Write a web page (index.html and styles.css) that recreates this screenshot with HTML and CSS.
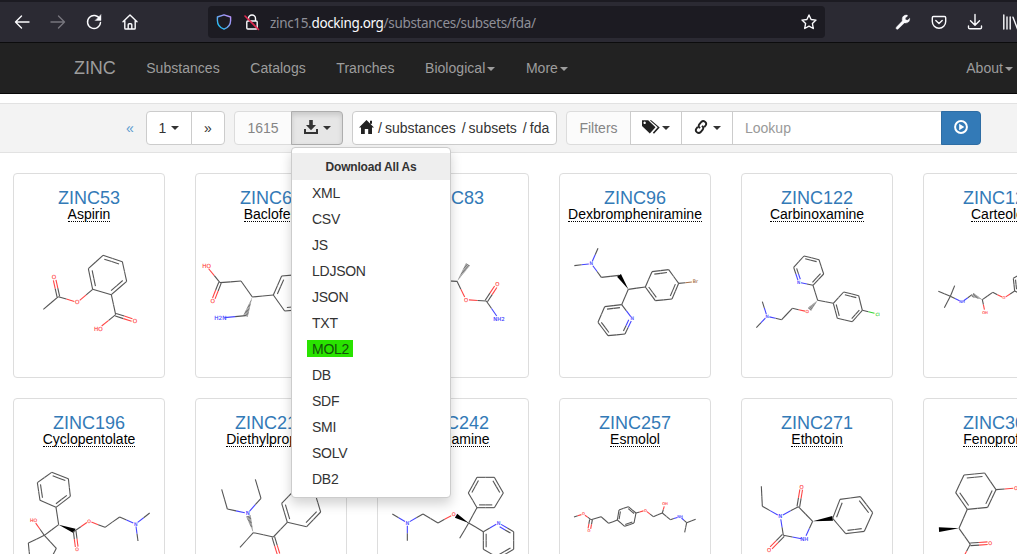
FILE: index.html
```html
<!DOCTYPE html>
<html lang="en">
<head>
<meta charset="utf-8">
<title>ZINC substances</title>
<link rel="stylesheet" href="styles.css">
</head>
<body>
<div class="browser">
  <svg class="bi back" viewBox="0 0 16 16"><path d="M15 8H1.500M7.500 2 1.500 8l6 6"/></svg>
  <svg class="bi forward" viewBox="0 0 16 16"><path d="M1 8h13.500M8.500 2l6 6-6 6"/></svg>
  <svg class="bi reload" viewBox="0 0 16 16"><path d="M13.800 5A6.500 6.500 0 1 0 14.500 8.500"/><path class="solid" d="M15 .8v5.700H9.300z"/></svg>
  <svg class="bi home" viewBox="0 0 16 16"><path d="M1 7.800 8 1l7 6.800M2.800 7v7.200q0 .8.8.8h8.800q.8 0 .8-.8V7M6.200 15v-4.200q0-1 1-1h1.600q1 0 1 1V15"/></svg>
  <div class="urlbar">
    <svg class="bi shield" viewBox="0 0 16 16"><defs><linearGradient id="sg" x1="0" y1="1" x2="1" y2="0"><stop offset="0" stop-color="#00c8f5"/><stop offset=".6" stop-color="#8a9cf0"/><stop offset="1" stop-color="#c090ff"/></linearGradient></defs><path stroke="url(#sg)" d="M8 .8 14.600 3v3.500c0 4-2.500 7.200-6.600 8.700C3.900 13.700 1.400 10.500 1.400 6.500V3z"/></svg>
    <svg class="bi lock" viewBox="0 0 16 16"><path d="M4.500 7V4.500a3.500 3.500 0 0 1 7 0V7M3.800 7h8.400q1 0 1 1v6q0 1-1 1H3.800q-1 0-1-1V8q0-1 1-1z"/><path class="slash" d="M1 2l13.500 13.500"/></svg>
    <span class="url">zinc15.<b>docking.org</b>/substances/subsets/fda/</span>
    <svg class="bi star" viewBox="0 0 16 16"><path d="M8 1l2.100 4.500 4.900.6-3.600 3.400.9 5L8 12.100l-4.300 2.400.9-5L1 6.100l4.900-.6z"/></svg>
  </div>
  <svg class="bi wrench" viewBox="0 0 16 16"><path class="solid" d="M14.700 4.600 12.400 6.300 10.500 5.800 10.200 3.900 12.400 2.200V1.200C9.500.6 7 2.500 7.200 5.500L7.300 7 1.300 13.200q-.7 1.500.4 2 1 .3 1.700-.5L9.300 8.900C12.800 9.500 15 7.500 14.700 4.600z"/></svg>
  <svg class="bi pocket" viewBox="0 0 16 16"><path d="M2.500 2.500h11q1.200 0 1.200 1.200V7.500a6.700 6.700 0 0 1-13.400 0V3.700q0-1.200 1.200-1.200zM4.800 6.500 8 9.600l3.200-3.100"/></svg>
  <svg class="bi dl" viewBox="0 0 16 16"><path d="M8 .5v10.500M3.500 6.800 8 11.200l4.500-4.400M1.500 12v1.500q0 1.300 1.300 1.300h10.400q1.300 0 1.300-1.300V12"/></svg>
  <svg class="bi library" viewBox="0 0 16 16"><path d="M.8 1v14M4 3v12M7.200 3v12M10 3.200 14.500 15"/></svg>
</div>
<nav class="navbar">
  <span class="brand">ZINC</span>
  <span>Substances</span>
  <span>Catalogs</span>
  <span>Tranches</span>
  <span>Biological<i class="caret"></i></span>
  <span>More<i class="caret"></i></span>
  <span class="about">About<i class="caret"></i></span>
</nav>
<div class="band">
  <span class="prev">«</span>
  <div class="group pager"><span class="btn page">1<i class="caret"></i></span><span class="btn next">»</span></div>
  <div class="group results">
    <span class="btn muted count">1615</span>
    <span class="btn active download"><svg class="gi" viewBox="0 0 14 14"><path d="M5.200 0h3.600v5h3.200L7 10.200 2 5h3.200zM0 9h2v3h10V9h2v5H0z"/></svg><i class="caret"></i>
      <div class="menu">
        <div class="menu-title">Download All As</div>
        <div class="item">XML</div><div class="item">CSV</div><div class="item">JS</div><div class="item">LDJSON</div><div class="item">JSON</div><div class="item">TXT</div>
        <div class="item"><mark>MOL2</mark></div>
        <div class="item">DB</div><div class="item">SDF</div><div class="item">SMI</div><div class="item">SOLV</div><div class="item">DB2</div>
      </div>
    </span>
  </div>
  <div class="crumbs"><svg class="house" viewBox="0 0 15 14"><path d="M7.500 0 15 7.500h-2V14H9.200V9H5.800v5H2V7.500H0zM11 .8h2v3h-2z"/></svg><span>/</span><span>substances</span><span class="sep">/</span><span>subsets</span><span class="sep">/</span><span>fda</span></div>
  <div class="group search">
    <span class="btn muted filters">Filters</span>
    <span class="btn tags"><svg class="tag-icon" viewBox="0 0 18 14"><path fill-rule="evenodd" d="M0 .2h6.200L13.500 7.200 7.800 13.600 0 6zM2.600 1.600a1.200 1.200 0 1 0 .1 0z"/><path d="M7.700.2h1.500L17.700 7.400 12 13.800l-1.200-1 4.900-5.500z"/></svg><i class="caret"></i></span>
    <span class="btn link"><svg class="chain" viewBox="0 0 14 14"><g fill="none" stroke="#222" stroke-width="1.900"><path d="M5.900 8.300 5 7Q4.300 5.700 5.300 4.300L7.300 2q1.700-1.700 3.700-.3 2 1.600.7 3.600L10.200 7.300"/><path d="M8.100 5.700 9 7q.7 1.300-.3 2.700L6.700 12q-1.700 1.700-3.700.3-2-1.600-.7-3.600L3.800 6.700"/></g></svg><i class="caret"></i></span>
    <input class="lookup" placeholder="Lookup">
    <span class="btn go"><svg class="gi" viewBox="0 0 14 14"><circle cx="7" cy="7" r="5.900" fill="none" stroke="#fff" stroke-width="2"/><path fill="#fff" d="M5.200 3.800 10.300 7l-5.100 3.200z"/></svg></span>
  </div>
</div>
<main class="cards">
  <article class="card"><h4>ZINC53</h4><p><abbr>Aspirin</abbr></p><svg class="mol" data-mol="aspirin" viewBox="42 177 450 456"></svg></article>
  <article class="card"><h4>ZINC61</h4><p><abbr>Baclofen</abbr></p><svg class="mol" data-mol="baclofen" viewBox="588 177 450 456"></svg></article>
  <article class="card"><h4>ZINC83</h4><p></p><svg class="mol" data-mol="carbamate" viewBox="294 237 450 456"></svg></article>
  <article class="card"><h4>ZINC96</h4><p><abbr>Dexbrompheniramine</abbr></p><svg class="mol" data-mol="dexbrompheniramine" viewBox="30 177 450 456"></svg></article>
  <article class="card"><h4>ZINC122</h4><p><abbr>Carbinoxamine</abbr></p><svg class="mol" data-mol="carbinoxamine" viewBox="21 177 450 456"></svg></article>
  <article class="card"><h4>ZINC125</h4><p><abbr>Carteolol</abbr></p><svg class="mol" data-mol="carteolol" viewBox="567 177 450 456"></svg></article>
  <article class="card"><h4>ZINC196</h4><p><abbr>Cyclopentolate</abbr></p><svg class="mol" data-mol="cyclopentolate" viewBox="42 177 450 456"></svg></article>
  <article class="card"><h4>ZINC210</h4><p><abbr>Diethylpropion</abbr></p><svg class="mol" data-mol="diethylpropion" viewBox="588 177 450 456"></svg></article>
  <article class="card"><h4>ZINC242</h4><p><abbr>Doxylamine</abbr></p><svg class="mol" data-mol="doxylamine" viewBox="294 327 450 456"></svg></article>
  <article class="card"><h4>ZINC257</h4><p><abbr>Esmolol</abbr></p><svg class="mol" data-mol="esmolol" viewBox="30 177 450 456"></svg></article>
  <article class="card"><h4>ZINC271</h4><p><abbr>Ethotoin</abbr></p><svg class="mol" data-mol="ethotoin" viewBox="21 177 450 456"></svg></article>
  <article class="card"><h4>ZINC301</h4><p><abbr>Fenoprofen</abbr></p><svg class="mol" data-mol="fenoprofen" viewBox="567 177 450 456"></svg></article>
</main>
<script src="molecules.js"></script>
</body>
</html>
```
FILE: styles.css
```css
* { box-sizing: border-box; }
html { overflow: hidden; }
body { margin: 0; width: 1017px; height: 554px; overflow: hidden; background: #fff; font: 14px/20px "Liberation Sans", Arial, sans-serif; color: #333; }
.browser { display: flex; align-items: center; height: 43px; overflow: hidden; background: #2b2a33; border-top: 2px solid #1c1b22; border-bottom: 1px solid #0c0c0d; padding-left: 14px; }
.bi { flex: none; width: 16px; height: 16px; fill: none; stroke: #fbfbfe; stroke-width: 1.4; stroke-linecap: round; stroke-linejoin: round; overflow: visible; }
.bi .solid { fill: #fbfbfe; stroke-width: .4; }
.bi .slash { stroke: #e22850; stroke-width: 1.6; }
.forward { margin-left: 20px; stroke: #77767e; }
.reload { margin-left: 20px; }
.home { margin-left: 20px; }
.urlbar { flex: none; display: flex; align-items: center; width: 617px; height: 32px; margin-left: 70px; margin-right: 70px; padding: 0 8px; border-radius: 4px; background: #1c1b22; }
.lock { margin-left: 12px; }
.url { margin-left: 10px; color: #8f8f98; font: 13.5px/20px "Noto Sans", sans-serif; letter-spacing: -.33px; white-space: nowrap; padding-top: 1px; }
.url b { font-weight: 400; color: #fbfbfe; }
.star { margin-left: auto; }
.pocket, .dl, .library { margin-left: 20px; }
.caret { display: inline-block; border: 4px solid transparent; border-top-color: currentColor; border-bottom: 0; vertical-align: middle; margin-left: 2px; }
.navbar { display: flex; align-items: center; gap: 30.6px; height: 51px; padding: 0 4px 0 74px; background: #222; border-bottom: 1px solid #080808; color: #9d9d9d; white-space: nowrap; letter-spacing: .03px; }
.brand { font-size: 18px; letter-spacing: -.1px; }
.about { margin-left: auto; }
.band { display: flex; align-items: center; height: 50px; margin-top: 9px; background: #f3f3f3; border-top: 1px solid #e2e2e2; border-bottom: 1px solid #e2e2e2; }
.prev { width: 146px; padding-left: 126px; color: #5d9bd0; }
.group { display: flex; height: 34px; }
.btn { position: relative; display: flex; align-items: center; justify-content: center; height: 34px; border: 1px solid #ccc; background: #fff; color: #333; }
.btn + .btn { margin-left: -1px; }
.btn:first-child { border-radius: 4px 0 0 4px; }
.btn:last-child { border-radius: 0 4px 4px 0; }
.page { width: 46px; }
.page .caret { margin-left: 5px; }
.next { width: 34px; }
.results { margin-left: 9px; }
.muted { color: #858585; background: #fbfbfb; border-color: #dcdcdc; }
.count { width: 58px; }
.download { width: 52px; }
.active { background: #e6e6e6; border-color: #adadad; box-shadow: inset 0 3px 5px rgba(0,0,0,.125); }
.btn .caret { flex: none; }
.download .caret, .link .caret { margin-left: 5px; }
.download .gi { margin-top: -2px; }
.gi, .chain { width: 14px; height: 14px; fill: #333; }
.chain { margin-top: -2px; }
.menu { position: absolute; z-index: 5; left: -1px; top: 35px; width: 160px; padding: 5px 0; background: #fff; border: 1px solid #ccc; border-radius: 4px; box-shadow: 0 6px 12px rgba(0,0,0,.175); }
.menu-title { height: 27px; background: #eee; font-size: 12px; line-height: 29px; font-weight: 700; text-align: center; letter-spacing: -.2px; }
.item { height: 26px; padding-left: 20px; line-height: 26px; letter-spacing: -.25px; }
mark { display: inline-block; height: 17px; line-height: 19px; margin-left: -5px; padding: 0 4px 0 5px; background: #29e300; color: #12500b; }
.crumbs { display: flex; align-items: center; width: 205px; height: 34px; margin-left: 9px; padding-left: 6px; border: 1px solid #ccc; border-radius: 4px; background: #fff; white-space: nowrap; }
.crumbs span + span { margin-left: 3px; }
.crumbs .sep.sep { margin-left: 6px; }
.house { width: 15px; height: 14px; margin: -2px 4px 0 0; fill: #222; }
.search { margin-left: 9px; }
.filters { width: 65px; }
.tags, .link { width: 52px; }
.tags .caret { margin-left: 2px; }
.tag-icon { width: 18px; height: 14px; margin-top: -2px; fill: #222; }
.lookup { width: 210px; height: 34px; margin: 0 0 0 -1px; padding: 6px 12px; border: 1px solid #ccc; background: #fff; font: inherit; color: #555; }
.lookup::placeholder { color: #999; opacity: 1; }
.go { width: 40px; margin-left: -1px; background: #337ab7; border-color: #2e6da4; }
.go .gi { margin-top: -2px; }
.cards { display: grid; grid-template-columns: repeat(6, 152px); gap: 20px 30px; padding: 20px 0 0 13px; height: 401px; overflow: hidden; }
.card { height: 205px; padding-top: 14px; border: 1px solid #ddd; border-radius: 4px; text-align: center; color: #000; }
.card h4 { margin: 0; font-size: 18px; line-height: 20px; font-weight: 400; color: #337ab7; }
.card p { margin: -2px 0 0; height: 18px; line-height: 16px; }
.card abbr { border-bottom: 1px dotted #000; display: inline-block; height: 15px; line-height: 14px; }
.mol { display: block; width: 150px; height: 152px; }
.mol path { fill: none; stroke-width: 3.3; }
.mol text { font-family: "DejaVu Sans", sans-serif; text-anchor: middle; stroke-width: .4; }
```
FILE: molecules.js
```javascript
// Atoms are "x,y[,label]"; bonds are "a-b" plus a style letter:
// i = double inside a ring, d = centred double, w = solid wedge, h = hashed wedge.
const molecules = {
  aspirin: { size: 17,
    atoms: '309,271 367,290 380,349 334,389 278,373 265,311 232,412,O 175,395 162,336,O 130,433 347,449 405,468,O 295,491,HO',
    bonds: '0-1i 1-2 2-3i 3-4 4-5i 5-0 4-6 6-7 7-8d 7-9 3-10 10-11d 10-12', rings: [[0,1,2,3,4,5]] },
  baclofen: { size: 17,
    atoms: '620,304,HO 660,353 638,409,O 723,348 757,396 737,452 661,459,H2N 820,390 845,333 907,328 943,379 917,433 854,438',
    bonds: '0-1 1-2d 1-3 3-4 4-5h 5-6 4-7 7-8i 8-9 9-10i 10-11 11-12i 12-7', rings: [[7,8,9,10,11,12]] },
  carbamate: { size: 16,
    atoms: '475,406 531,409 564,358 558,464,O 619,468 652,418,O 657,523,NH2',
    bonds: '0-1 1-2h 1-3 3-4 4-5d 4-6', rings: [] },
  dexbrompheniramine: { size: 14,
    atoms: '144,250 124,296,N 73,302 154,337 207,331 235,373 286,366 306,320 356,314 386,355 366,402 316,407 436,350,Br 215,419 164,425 144,472 174,512 225,507 247,461,N',
    bonds: '0-1 1-2 1-3 3-4 5-4w 5-6 6-7 7-8i 8-9 9-10i 10-11 11-6i 9-12 5-13 13-14i 14-15 15-16i 16-17 17-18i 18-13', rings: [[6,7,8,9,10,11],[13,14,15,16,17,18]] },
  carbinoxamine: { size: 13,
    atoms: '207,273 252,284 266,327 234,361 191,352,N 176,307 248,406 217,440,O 172,430 140,464 96,454,N 82,410 64,488 295,415 326,381 371,392 382,436 352,470 307,460 428,447,Cl',
    bonds: '0-1i 1-2 2-3i 3-4 4-5i 5-0 3-6 6-7h 7-8 8-9 9-10 10-11 10-12 6-13 13-14 14-15i 15-16 16-17i 17-18 18-13i 16-19', rings: [[0,1,2,3,4,5],[13,14,15,16,17,18]] },
  carteolol: { size: 11,
    atoms: '646,394 610,379 659,362 628,428 681,411,NH 711,389 742,404 750,442,OH 773,382 807,399,O 839,378 835,340 868,320 900,340 900,374 870,393',
    bonds: '0-1 0-2 0-3 0-4 4-5 6-5h 6-7 6-8 8-9 9-10 10-11i 11-12 12-13i 13-14 14-15i 15-10', rings: [[10,11,12,13,14,15]] },
  cyclopentolate: { size: 14,
    atoms: '155,247 205,266 211,319 168,352 120,331 112,278 176,404 224,423 267,393,O 315,412 359,381 407,402,N 449,369 414,453 231,478,O 133,436 101,391,HO 85,459 90,510 144,523 169,475',
    bonds: '0-1i 1-2 2-3i 3-4 4-5i 5-0 3-6 6-7w 7-8 8-9 9-10 10-11 11-12 11-13 7-14d 6-15 15-16 15-17 17-18 18-19 19-20 20-15', rings: [[0,1,2,3,4,5]] },
  diethylpropion: { size: 16,
    atoms: '665,298 682,357 743,370,N 783,325 766,268 760,428 720,472 820,441 838,500,O 862,397 845,340 887,297 945,310 962,366 920,410',
    bonds: '0-1 1-2 2-3 3-4 5-2h 5-6 5-7 7-8d 7-9 9-10i 10-11 11-12i 12-13 13-14i 14-9', rings: [[9,10,11,12,13,14]] },
  doxylamine: { size: 15,
    atoms: '337,522 382,549,N 382,602 429,522 474,549 521,523,O 566,549 539,595 591,503 565,459 591,412 643,412 670,459 643,503 610,575 656,549,N 701,575 701,628 656,654 610,628',
    bonds: '0-1 1-2 1-3 3-4 4-5 6-5w 6-7 6-8 8-9 9-10i 10-11 11-12i 12-13 13-8i 6-14 14-15 15-16i 16-17 17-18i 18-19 19-14i', rings: [[8,9,10,11,12,13],[14,15,16,17,18,19]] },
  esmolol: { size: 11,
    atoms: '72,381 100,372,O 123,389 117,422,O 153,380 176,400 202,390 207,360 235,350 258,369 252,399 224,409 286,361,O 310,380 337,369 345,341,OH 361,389 390,380,NH 410,398 437,388 404,427',
    bonds: '0-1 1-2 2-3d 2-4 4-5 5-6 6-7i 7-8 8-9i 9-10 10-11i 11-6 9-12 12-13 13-14 14-15 14-16 16-17 17-18 18-19 18-20', rings: [[6,7,8,9,10,11]] },
  ethotoin: { size: 16,
    atoms: '79,289 82,349 136,379,N 190,350 200,290,O 233,394 208,448,NH 145,436 102,480,O 293,385 315,328 376,320 413,368 388,424 332,431',
    bonds: '0-1 1-2 2-3 3-4d 3-5 5-6 6-7 7-2 7-8d 5-9w 9-10i 10-11 11-12i 12-13 13-14i 14-9', rings: [[9,10,11,12,13,14]] },
  fenoprofen: { size: 15,
    atoms: '687,255 749,249 783,299 758,352 697,358 662,308 843,294,O 672,415 612,419 706,463 766,459,O 678,515,HO',
    bonds: '0-1i 1-2 2-3i 3-4 4-5i 5-0 2-6 4-7 7-8w 7-9 9-10d 9-11', rings: [[0,1,2,3,4,5]] }
};

const tint = label => !label ? '#555' : label === 'Br' ? '#a5704a' : label === 'Cl' ? '#35d535' : label.includes('N') ? '#4545ff' : '#ff4545';

function drawMolecule(svg, mol) {
  const atoms = mol.atoms.split(' ').map(t => { const [x, y, label] = t.split(','); return { x: +x, y: +y, label }; });
  const out = [];
  const line = (x1, y1, x2, y2, c) => out.push(`<path d="M${x1} ${y1}L${x2} ${y2}" stroke="${c}"/>`);
  for (const spec of mol.bonds.split(' ')) {
    const [, ai, bi, kind] = spec.match(/(\d+)-(\d+)(\w?)/);
    const a = atoms[ai], b = atoms[bi];
    const dx = b.x - a.x, dy = b.y - a.y, len = Math.hypot(dx, dy), ux = dx / len, uy = dy / len;
    const s = a.label ? mol.size * .55 : 0, e = len - (b.label ? mol.size * (b.label.length > 1 ? .75 : .55) : 0);
    const seg = (off, from, to) => {
      const pt = t => [a.x + ux * t - uy * off, a.y + uy * t + ux * off];
      const mid = (from + to) / 2;
      line(...pt(from), ...pt(mid), tint(a.label));
      line(...pt(mid), ...pt(to), tint(b.label));
    };
    if (kind === 'w') {
      const w = 7, ex = a.x + ux * e, ey = a.y + uy * e;
      out.push(`<polygon points="${a.x},${a.y} ${ex - uy * w},${ey + ux * w} ${ex + uy * w},${ey - ux * w}" fill="#000"/>`);
    } else if (kind === 'h') {
      for (let t = 3; t <= e; t += 4) {
        const w = 7 * t / e, x = a.x + ux * t, y = a.y + uy * t;
        line(x - uy * w, y + ux * w, x + uy * w, y - ux * w, '#777');
      }
    } else if (kind === 'd') {
      seg(4, s, e); seg(-4, s, e);
    } else {
      seg(0, s, e);
      if (kind === 'i') {
        const ring = mol.rings.find(r => r.includes(+ai) && r.includes(+bi));
        const cx = ring.reduce((n, k) => n + atoms[k].x, 0) / ring.length;
        const cy = ring.reduce((n, k) => n + atoms[k].y, 0) / ring.length;
        const side = Math.sign((cx - a.x) * -uy + (cy - a.y) * ux);
        seg(side * len * .16, Math.max(s, len * .12), Math.min(e, len * .88));
      }
    }
  }
  for (const a of atoms) if (a.label)
    out.push(`<text x="${a.x}" y="${a.y + mol.size * .36}" font-size="${mol.size}" fill="${tint(a.label)}" stroke="${tint(a.label)}">${a.label}</text>`);
  svg.innerHTML = out.join('');
}

document.querySelectorAll('.mol').forEach(svg => drawMolecule(svg, molecules[svg.dataset.mol]));
```
